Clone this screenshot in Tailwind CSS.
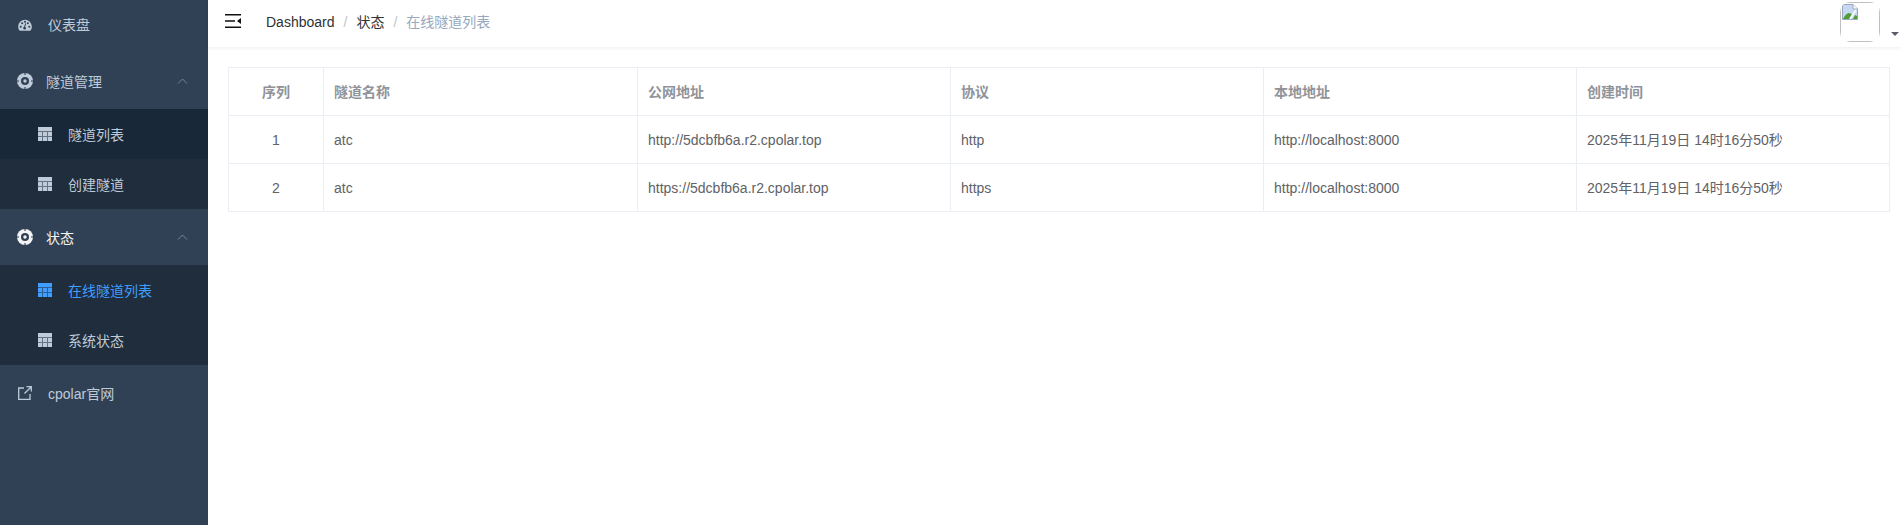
<!DOCTYPE html>
<html lang="zh-CN">
  <head>
    <meta charset="UTF-8" />
    <meta name="viewport" content="width=device-width, initial-scale=1.0" />
    <script src="https://cdn.jsdelivr.net/npm/@tailwindcss/browser@4"></script>
    <title>在线隧道列表</title>
  </head>
  <body class="h-[525px] overflow-hidden bg-white font-['Liberation_Sans','Noto_Sans_CJK_SC',sans-serif] text-sm">
    <div class="flex h-full">
      <!-- sidebar -->
      <aside class="w-[208px] h-full shrink-0 bg-[#304156] text-[#bfcbd9] overflow-hidden">
        <div class="-mt-[3px]">
          <div class="h-14 flex items-center pl-[18px]">
            <svg class="w-[14px] h-[12px] fill-[#bfcbd9]" viewBox="0 0 16 14">
              <path fill-rule="evenodd" d="M8 1a8 8 0 0 0-8 8c0 1.600.5 3 1.300 4.200.2.300.5.500.9.500h11.600c.4 0 .7-.2.900-.5A8 8 0 0 0 8 1ZM3 10.200a1.200 1.200 0 1 1 0-2.400 1.200 1.200 0 0 1 0 2.400Zm1.700-4a1.200 1.200 0 1 1 0-2.400 1.200 1.200 0 0 1 0 2.400ZM8 4.500a1.200 1.200 0 1 1 0-2.400 1.200 1.200 0 0 1 0 2.400Zm1.300 6.300a1.700 1.700 0 1 1-2.300-1.700l1.300-4 1 .3-1.200 4a1.700 1.700 0 0 1 1.200 1.400Zm2-4.600a1.200 1.200 0 1 1 0-2.400 1.200 1.200 0 0 1 0 2.400Zm1.700 4a1.200 1.200 0 1 1 0-2.400 1.200 1.200 0 0 1 0 2.400Z"/>
            </svg>
            <span class="ml-4">仪表盘</span>
          </div>
          <div class="h-14 flex items-center pl-[17px] relative">
            <svg class="w-4 h-4" viewBox="0 0 16 16">
              <circle cx="8" cy="8" r="8" fill="#bfcbd9"/>
              <circle cx="8" cy="8" r="4" fill="#304156"/>
              <circle cx="8" cy="8" r="1.700" fill="#bfcbd9"/>
              <path d="M7.200 0h1.600v2H7.200zM7.200 14h1.600v2H7.200zM0 7.200h2v1.600H0zM14 7.200h2v1.600h-2z" fill="#304156" fill-opacity=".7"/>
            </svg>
            <span class="ml-[13px] mt-[2px]">隧道管理</span>
            <svg class="absolute left-[177px] top-[25px] w-[11px] h-[6px] fill-none stroke-[#7a8594] stroke-1" viewBox="0 0 11 6"><path d="M1 5.500 5.500 1 10 5.500"/></svg>
          </div>
          <div class="h-[50px] flex items-center pl-[38px] bg-[#182838]">
            <svg class="w-[14px] h-[14px] fill-[#bfcbd9]" viewBox="0 0 14 14"><path fill-opacity=".45" d="M0 0h14v14H0z"/><path d="M0 0h14v4H0zM0 5h4v4H0zM5 5h4v4H5zM10 5h4v4h-4zM0 10h4v4H0zM5 10h4v4H5zM10 10h4v4h-4z"/></svg>
            <span class="ml-4 mt-[2px]">隧道列表</span>
          </div>
          <div class="h-[50px] flex items-center pl-[38px] bg-[#1f2d3d]">
            <svg class="w-[14px] h-[14px] fill-[#bfcbd9]" viewBox="0 0 14 14"><path fill-opacity=".45" d="M0 0h14v14H0z"/><path d="M0 0h14v4H0zM0 5h4v4H0zM5 5h4v4H5zM10 5h4v4h-4zM0 10h4v4H0zM5 10h4v4H5zM10 10h4v4h-4z"/></svg>
            <span class="ml-4 mt-[2px]">创建隧道</span>
          </div>
          <div class="h-14 flex items-center pl-[17px] relative text-[#f4f4f5]">
            <svg class="w-4 h-4" viewBox="0 0 16 16">
              <circle cx="8" cy="8" r="8" fill="#f4f4f5"/>
              <circle cx="8" cy="8" r="4" fill="#304156"/>
              <circle cx="8" cy="8" r="1.700" fill="#f4f4f5"/>
              <path d="M7.200 0h1.600v2H7.200zM7.200 14h1.600v2H7.200zM0 7.200h2v1.600H0zM14 7.200h2v1.600h-2z" fill="#304156" fill-opacity=".7"/>
            </svg>
            <span class="ml-[13px] mt-[2px]">状态</span>
            <svg class="absolute left-[177px] top-[25px] w-[11px] h-[6px] fill-none stroke-[#7a8594] stroke-1" viewBox="0 0 11 6"><path d="M1 5.500 5.500 1 10 5.500"/></svg>
          </div>
          <div class="h-[50px] flex items-center pl-[38px] bg-[#1f2d3d] text-[#409eff]">
            <svg class="w-[14px] h-[14px] fill-[#409eff]" viewBox="0 0 14 14"><path fill-opacity=".45" d="M0 0h14v14H0z"/><path d="M0 0h14v4H0zM0 5h4v4H0zM5 5h4v4H5zM10 5h4v4h-4zM0 10h4v4H0zM5 10h4v4H5zM10 10h4v4h-4z"/></svg>
            <span class="ml-4 mt-[2px]">在线隧道列表</span>
          </div>
          <div class="h-[50px] flex items-center pl-[38px] bg-[#1f2d3d]">
            <svg class="w-[14px] h-[14px] fill-[#bfcbd9]" viewBox="0 0 14 14"><path fill-opacity=".45" d="M0 0h14v14H0z"/><path d="M0 0h14v4H0zM0 5h4v4H0zM5 5h4v4H5zM10 5h4v4h-4zM0 10h4v4H0zM5 10h4v4H5zM10 10h4v4h-4z"/></svg>
            <span class="ml-4 mt-[2px]">系统状态</span>
          </div>
          <div class="h-14 flex items-center pl-[18px]">
            <svg class="w-[14px] h-[14px] fill-none stroke-[#bfcbd9] stroke-[1.300]" viewBox="0 0 14 14">
              <path d="M6 2H.7v11.300H12V8M8.500.7h4.800v4.800M13.300.7 6.500 7.500"/>
            </svg>
            <span class="ml-4 mt-[2px]">cpolar官网</span>
          </div>
        </div>
      </aside>

      <div class="flex-1 min-w-0">
        <!-- navbar -->
        <header class="h-[47px] flex items-center relative bg-white shadow-[0_1px_4px_rgba(0,21,41,0.08)]">
          <svg class="ml-[17px] -mt-[5px] w-4 h-[14px] fill-[#111]" viewBox="0 0 16 14">
            <path d="M0 0h16v1.600H0zM0 6.200h10v1.600H0zM0 12.400h16V14H0zM16 4v6l-4-3z"/>
          </svg>
          <nav class="ml-[25px] -mt-[3px] flex items-center text-[#303133]">
            <span>Dashboard</span>
            <span class="mx-[9px] text-[#c0c4cc]">/</span>
            <span>状态</span>
            <span class="mx-[9px] text-[#c0c4cc]">/</span>
            <span class="text-[#97a8be]">在线隧道列表</span>
          </nav>
          <div class="absolute left-[1632px] top-[2px] w-10 h-10 rounded-[10px] overflow-hidden">
            <div class="w-full h-full border border-[#c0c0c0] p-[1px]">
              <svg class="w-4 h-4" viewBox="0 0 16 16">
                <path d="M.5.500H11L15.500 5v10.500H.5z" fill="#c6d8f2" stroke="#9aa7b8"/>
                <path d="M11 .5V5h4.500" fill="#fff" stroke="#9aa7b8"/>
                <path d="M1 15c2-4 4-6 6-6l3 1-3 5z" fill="#4f9e33"/>
                <path d="M11 15l2-4 2 1v3z" fill="#4f9e33"/>
                <path d="M8 15l6-9" stroke="#fff" stroke-width="1.500"/>
              </svg>
            </div>
          </div>
          <div class="absolute left-[1683px] top-[32px] w-0 h-0 border-x-4 border-x-transparent border-t-[4px] border-t-[#5a5e66]"></div>
        </header>

        <!-- table -->
        <main class="pt-5 pl-5 pr-[11px]">
          <table class="w-full table-fixed border-collapse text-[#606266]">
            <thead>
              <tr class="h-12 text-[#909399] font-bold">
                <th class="w-[95px] border border-[#ebeef5] font-bold">序列</th>
                <th class="w-[314px] border border-[#ebeef5] px-[10px] text-left font-bold">隧道名称</th>
                <th class="w-[313px] border border-[#ebeef5] px-[10px] text-left font-bold">公网地址</th>
                <th class="w-[313px] border border-[#ebeef5] px-[10px] text-left font-bold">协议</th>
                <th class="w-[313px] border border-[#ebeef5] px-[10px] text-left font-bold">本地地址</th>
                <th class="border border-[#ebeef5] px-[10px] text-left font-bold">创建时间</th>
              </tr>
            </thead>
            <tbody>
              <tr class="h-12">
                <td class="border border-[#ebeef5] text-center">1</td>
                <td class="border border-[#ebeef5] px-[10px]">atc</td>
                <td class="border border-[#ebeef5] px-[10px]">http://5dcbfb6a.r2.cpolar.top</td>
                <td class="border border-[#ebeef5] px-[10px]">http</td>
                <td class="border border-[#ebeef5] px-[10px]">http://localhost:8000</td>
                <td class="border border-[#ebeef5] px-[10px]">2025年11月19日 14时16分50秒</td>
              </tr>
              <tr class="h-12">
                <td class="border border-[#ebeef5] text-center">2</td>
                <td class="border border-[#ebeef5] px-[10px]">atc</td>
                <td class="border border-[#ebeef5] px-[10px]">https://5dcbfb6a.r2.cpolar.top</td>
                <td class="border border-[#ebeef5] px-[10px]">https</td>
                <td class="border border-[#ebeef5] px-[10px]">http://localhost:8000</td>
                <td class="border border-[#ebeef5] px-[10px]">2025年11月19日 14时16分50秒</td>
              </tr>
            </tbody>
          </table>
        </main>
      </div>
    </div>
  </body>
</html>
